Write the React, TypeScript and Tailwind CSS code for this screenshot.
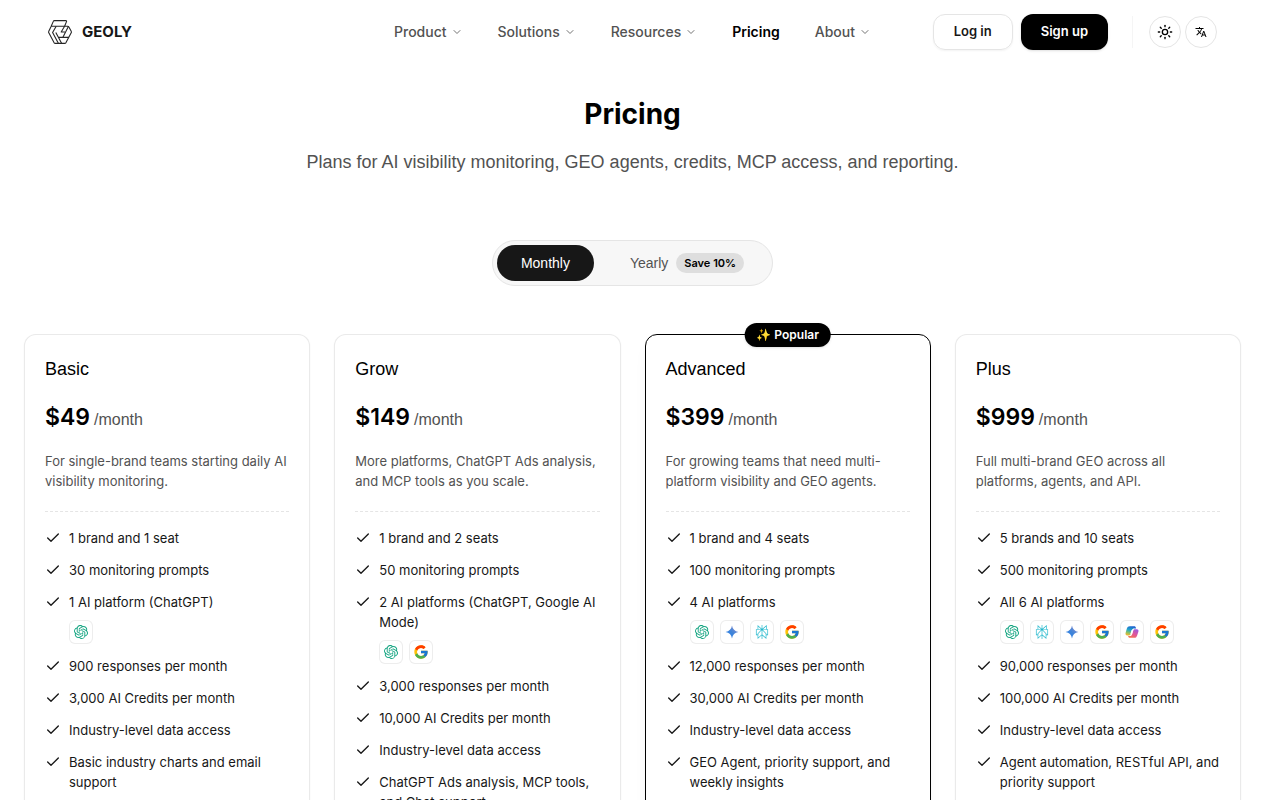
import type { ReactNode } from "react";
import { useState } from "react";
import clsx from "clsx";
import { Check, ChevronDown, Sun } from "lucide-react";
import { FcGoogle } from "react-icons/fc";
import { SiOpenai, SiPerplexity } from "react-icons/si";
import { MdTranslate } from "react-icons/md";

type Platform = "chatgpt" | "gemini" | "perplexity" | "google" | "copilot";

type Feature = {
  text: string;
  platforms?: Platform[];
};

type Plan = {
  name: string;
  price: number;
  description: string;
  popular?: boolean;
  features: Feature[];
};

const navItems = [
  { label: "Product", menu: true },
  { label: "Solutions", menu: true },
  { label: "Resources", menu: true },
  { label: "Pricing", menu: false },
  { label: "About", menu: true },
];

const plans: Plan[] = [
  {
    name: "Basic",
    price: 49,
    description: "For single-brand teams starting daily AI visibility monitoring.",
    features: [
      { text: "1 brand and 1 seat" },
      { text: "30 monitoring prompts" },
      { text: "1 AI platform (ChatGPT)", platforms: ["chatgpt"] },
      { text: "900 responses per month" },
      { text: "3,000 AI Credits per month" },
      { text: "Industry-level data access" },
      { text: "Basic industry charts and email support" },
    ],
  },
  {
    name: "Grow",
    price: 149,
    description: "More platforms, ChatGPT Ads analysis, and MCP tools as you scale.",
    features: [
      { text: "1 brand and 2 seats" },
      { text: "50 monitoring prompts" },
      { text: "2 AI platforms (ChatGPT, Google AI Mode)", platforms: ["chatgpt", "google"] },
      { text: "3,000 responses per month" },
      { text: "10,000 AI Credits per month" },
      { text: "Industry-level data access" },
      { text: "ChatGPT Ads analysis, MCP tools, and Chat support" },
    ],
  },
  {
    name: "Advanced",
    price: 399,
    description: "For growing teams that need multi-platform visibility and GEO agents.",
    popular: true,
    features: [
      { text: "1 brand and 4 seats" },
      { text: "100 monitoring prompts" },
      { text: "4 AI platforms", platforms: ["chatgpt", "gemini", "perplexity", "google"] },
      { text: "12,000 responses per month" },
      { text: "30,000 AI Credits per month" },
      { text: "Industry-level data access" },
      { text: "GEO Agent, priority support, and weekly insights" },
    ],
  },
  {
    name: "Plus",
    price: 999,
    description: "Full multi-brand GEO across all platforms, agents, and API.",
    features: [
      { text: "5 brands and 10 seats" },
      { text: "500 monitoring prompts" },
      {
        text: "All 6 AI platforms",
        platforms: ["chatgpt", "perplexity", "gemini", "google", "copilot", "google"],
      },
      { text: "90,000 responses per month" },
      { text: "100,000 AI Credits per month" },
      { text: "Industry-level data access" },
      { text: "Agent automation, RESTful API, and priority support" },
    ],
  },
];

const Logo = () => (
  <svg viewBox="0 0 24 24" className="size-6" fill="none" stroke="#262626" strokeWidth="1.1" strokeLinejoin="round">
    <path d="M6.500.6h11.200c.8 0 1 .4.800 1l-1.900 4.700h3c.6 0 1 .2 1.300.7l2.300 4.200c.3.500.3 1.100 0 1.600l-5.200 9.800c-.3.500-.8.800-1.400.8H7.400c-.6 0-1.100-.3-1.400-.8L.8 12.800c-.3-.5-.3-1.100 0-1.600l2.400-4.900L5.300 1.400c.2-.5.6-.8 1.200-.8z" />
    <path d="M3.200 6.300h13.400L13.200 12H17" />
    <path d="M8.200 6.300 4.600 12.500l5.900 10.900" />
    <path d="m20.500 6.300-5.700 11.100" />
    <path d="M20.800 17.400H10.500l-2.700-4.900M10.500 17.400l3.200 6" />
  </svg>
);

const GeminiIcon = () => (
  <svg viewBox="0 0 24 24" className="size-3.5">
    <defs>
      <linearGradient id="gemini" x1="0" y1="1" x2="1" y2="0">
        <stop offset="0" stopColor="#1c7df0" />
        <stop offset="0.5" stopColor="#4285d8" />
        <stop offset="1" stopColor="#9b8ac8" />
      </linearGradient>
    </defs>
    <path
      fill="url(#gemini)"
      d="M12 1c.9 6.200 4.800 10.100 11 11-6.200.9-10.100 4.800-11 11-.9-6.200-4.800-10.100-11-11C7.200 11.100 11.100 7.200 12 1z"
    />
  </svg>
);

const CopilotIcon = () => (
  <svg viewBox="0 0 24 24" className="size-3.5">
    <defs>
      <linearGradient id="copilot-left" x1="0.6" y1="0" x2="0.3" y2="1">
        <stop offset="0" stopColor="#1b5fd0" />
        <stop offset="0.45" stopColor="#25a9c9" />
        <stop offset="0.75" stopColor="#8fc060" />
        <stop offset="1" stopColor="#f2b632" />
      </linearGradient>
      <linearGradient id="copilot-right" x1="0.8" y1="0" x2="0.2" y2="1">
        <stop offset="0" stopColor="#9a5be0" />
        <stop offset="0.5" stopColor="#e0569a" />
        <stop offset="1" stopColor="#f5784a" />
      </linearGradient>
    </defs>
    <path
      fill="url(#copilot-left)"
      d="M8.500 2h7c1.700 0 2.500.8 3 2.300l.6 1.900h-3c-2.600 0-3.700 1-4.400 3.300l-1.800 5.700c-.6 1.900-1.500 2.600-3.300 2.600H4C1 17.800.3 15.600 1.200 12.700l2-6.500C4.200 3.200 5.600 2 8.500 2z"
    />
    <path
      fill="url(#copilot-right)"
      d="M15.500 22h-7c-1.700 0-2.500-.8-3-2.300l-.2-.7h2.500c2.600 0 3.700-1 4.400-3.300l2-6.100c.6-1.700 1.300-2.200 3.100-2.200H20c3 0 3.700 1.900 2.800 4.800l-2 5.600c-1 3-2.400 4.200-5.300 4.200z"
    />
    <path fill="#fff" d="m11.300 8.500 3-.2-2.200 7.200-3 .3z" />
  </svg>
);

const platformIcons: Record<Platform, ReactNode> = {
  chatgpt: <SiOpenai className="size-3.5 text-[#10a37f]" />,
  gemini: <GeminiIcon />,
  perplexity: <SiPerplexity className="size-3.5 text-[#22b8cd]" />,
  google: <FcGoogle className="size-4" />,
  copilot: <CopilotIcon />,
};

const Header = () => (
  <header className="flex h-16 items-center justify-between px-12 font-['Inter',sans-serif]">
    <a href="#" className="flex w-[348px] items-center gap-2.5 text-[15px] font-bold text-neutral-900">
      <Logo />
      GEOLY
    </a>
    <nav className="flex items-center gap-[35px] text-sm font-medium text-neutral-600">
      {navItems.map(({ label, menu }) =>
        menu ? (
          <button key={label} type="button" className="flex items-center gap-1">
            {label}
            <ChevronDown className="size-3 text-neutral-500" />
          </button>
        ) : (
          <a key={label} href="#" className="font-semibold text-black">
            {label}
          </a>
        )
      )}
    </nav>
    <div className="flex w-[348px] items-center justify-end">
      <button
        type="button"
        className="h-9 rounded-xl border border-neutral-200 px-5 text-[13px] font-semibold text-neutral-900 shadow-xs"
      >
        Log in
      </button>
      <button type="button" className="ml-2 h-9 rounded-xl bg-black px-5 text-[13px] font-semibold text-white shadow-sm">
        Sign up
      </button>
      <div className="mr-4 ml-6 h-8 w-px bg-neutral-100" />
      <button
        type="button"
        aria-label="Toggle theme"
        className="flex size-8 items-center justify-center rounded-full border border-neutral-200"
      >
        <Sun className="size-4" />
      </button>
      <button
        type="button"
        aria-label="Change language"
        className="ml-1 flex size-8 items-center justify-center rounded-full border border-neutral-200"
      >
        <MdTranslate className="size-3" />
      </button>
    </div>
  </header>
);

const PlanCard = ({ plan }: { plan: Plan }) => (
  <article
    className={clsx(
      "relative rounded-xl border bg-white p-5",
      plan.popular ? "border-black shadow-lg shadow-black/5" : "border-neutral-200/80 shadow-xs"
    )}
  >
    {plan.popular && (
      <span className="absolute -top-3 left-1/2 h-6 -translate-x-1/2 rounded-full bg-black px-3 font-['Inter',sans-serif] text-xs leading-6 font-semibold whitespace-nowrap text-white shadow-sm">
        ✨ Popular
      </span>
    )}
    <h2 className="text-lg leading-7 font-medium">{plan.name}</h2>
    <p className="mt-4 flex items-baseline gap-1">
      <span className="font-['Inter',sans-serif] text-[23px] leading-9 font-semibold">${plan.price}</span>
      <span className="text-base text-neutral-600">/month</span>
    </p>
    <p className="mt-4 font-['Inter',sans-serif] text-[13px] leading-5 text-neutral-600">{plan.description}</p>
    <hr className="mt-5 mb-4 border-dashed border-neutral-200" />
    <ul className="flex flex-col gap-3 font-['Inter',sans-serif] text-[13px] leading-5 text-neutral-900">
      {plan.features.map((feature) => (
        <li key={feature.text} className="flex gap-2">
          <Check className="mt-0.5 size-4 shrink-0" />
          <div>
            {feature.text}
            {feature.platforms && (
              <div className="mt-2 flex gap-1.5">
                {feature.platforms.map((platform, i) => (
                  <span
                    key={i}
                    className="flex size-6 items-center justify-center rounded-md border border-neutral-200/70 bg-white"
                  >
                    {platformIcons[platform]}
                  </span>
                ))}
              </div>
            )}
          </div>
        </li>
      ))}
    </ul>
  </article>
);

export default function App() {
  const [yearly, setYearly] = useState(false);

  return (
    <div className="min-h-screen bg-white pr-[15px] font-['Liberation_Sans',Arial,sans-serif] text-black">
      <Header />
      <main className="px-6 pt-8 pb-12">
        <h1 className="text-center font-['Inter',sans-serif] text-[28px] leading-9 font-bold">Pricing</h1>
        <p className="mt-4 text-center text-lg text-neutral-600">
          Plans for AI visibility monitoring, GEO agents, credits, MCP access, and reporting.
        </p>
        <div className="mt-16 flex justify-center">
          <div className="flex rounded-full border border-neutral-200 bg-[#f7f7f7] p-1 text-sm">
            <button
              type="button"
              onClick={() => setYearly(false)}
              className={clsx("h-9 rounded-full px-6", yearly ? "text-neutral-600" : "bg-neutral-900 text-white")}
            >
              Monthly
            </button>
            <button
              type="button"
              onClick={() => setYearly(true)}
              className={clsx(
                "ml-3 flex h-9 items-center gap-2 rounded-full px-6",
                yearly ? "bg-neutral-900 text-white" : "text-neutral-600"
              )}
            >
              Yearly
              <span className="rounded-full bg-[#dedede] px-2 font-['Inter',sans-serif] text-[11px] leading-5 font-semibold text-black">
                Save 10%
              </span>
            </button>
          </div>
        </div>
        <div className="mt-12 grid grid-cols-4 gap-6">
          {plans.map((plan) => (
            <PlanCard key={plan.name} plan={plan} />
          ))}
        </div>
      </main>
    </div>
  );
}
